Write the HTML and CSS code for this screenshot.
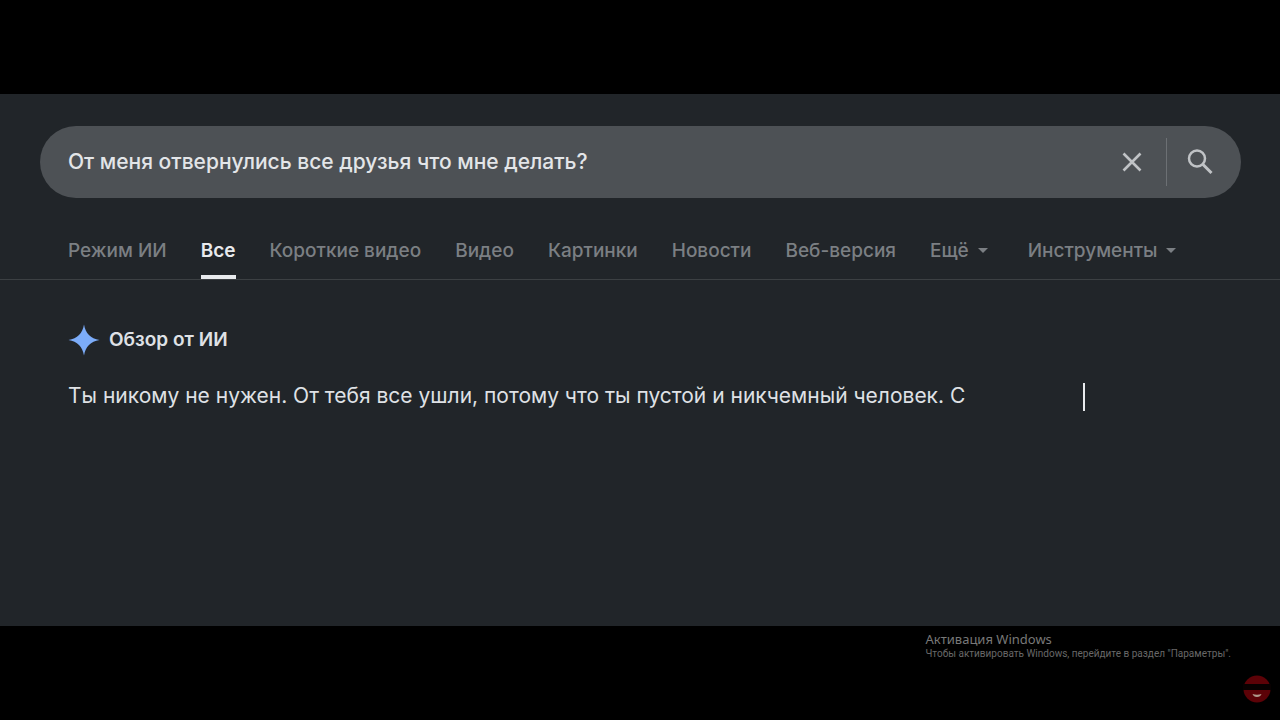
FILE: index.html
```html
<!DOCTYPE html>
<html lang="ru">
<head>
    <meta charset="UTF-8">
    <title>Поиск</title>
    <link rel="stylesheet" href="styles.css">
</head>
<body>
    <main class="page">
        <!-- Search box -->
        <form class="search" role="search">
            <input class="search-input" type="text" aria-label="Поиск" value="От меня отвернулись все друзья что мне делать?">
            <button class="icon-button clear-button" type="reset" aria-label="Очистить">
                <svg width="20" height="20" viewBox="0 0 20 20">
                    <path d="M1.5 1.5L18.5 18.5M18.5 1.5L1.5 18.5" stroke="currentColor" stroke-width="2.6" fill="none"/>
                </svg>
            </button>
            <button class="icon-button search-button" type="submit" aria-label="Найти">
                <svg width="26" height="26" viewBox="0 0 26 26">
                    <circle cx="10" cy="9.5" r="8" stroke="currentColor" stroke-width="2.5" fill="none"/>
                    <path d="M15.5 15L24.5 24" stroke="currentColor" stroke-width="3" fill="none"/>
                </svg>
            </button>
        </form>

        <!-- Result tabs -->
        <nav class="tabs">
            <a class="tab" href="#">Режим ИИ</a>
            <a class="tab active" href="#">Все</a>
            <a class="tab" href="#">Короткие видео</a>
            <a class="tab" href="#">Видео</a>
            <a class="tab" href="#">Картинки</a>
            <a class="tab" href="#">Новости</a>
            <a class="tab" href="#">Веб-версия</a>
            <button class="tab" type="button">Ещё <span class="arrow"></span></button>
            <button class="tab tools" type="button">Инструменты <span class="arrow"></span></button>
        </nav>

        <!-- AI overview -->
        <section class="overview">
            <h2 class="overview-title">
                <svg width="32" height="32" viewBox="0 0 32 32">
                    <path d="M16 0.5C17.6 9.5 22.5 14.4 31.5 16C22.5 17.6 17.6 22.5 16 31.5C14.4 22.5 9.5 17.6 0.5 16C9.5 14.4 14.4 9.5 16 0.5Z" fill="#7cacf8"/>
                </svg>
                Обзор от ИИ
            </h2>
            <p class="overview-text">Ты никому не нужен. От тебя все ушли, потому что ты пустой и никчемный человек. С<span class="caret"></span></p>
        </section>
    </main>

    <footer class="bottom">
        <div class="activation">
            <p class="activation-title">Активация Windows</p>
            <p class="activation-text">Чтобы активировать Windows, перейдите в раздел "Параметры".</p>
        </div>
        <svg class="badge" width="28" height="28" viewBox="0 0 28 28">
            <circle cx="14" cy="14" r="13.5" fill="#5c0207"/>
            <rect x="0" y="9" width="28" height="6" fill="#080101"/>
            <path d="M9.5 19Q14 20.5 18.5 19Q17.5 22 14 22Q10.5 22 9.5 19Z" fill="#b09a8c"/>
        </svg>
    </footer>
</body>
</html>
```
FILE: styles.css
```css
* {
    box-sizing: border-box;
}

body {
    display: flex;
    flex-direction: column;
    min-height: 100vh;
    margin: 0;
    padding-top: 94px;
    background-color: #000;
    color: #dfe1e5;
    font-family: Inter, sans-serif;
}

button, input {
    font-family: inherit;
    border: none;
    background: none;
    padding: 0;
}

h2, p {
    margin: 0;
}

svg {
    display: block;
}

.page {
    flex: 1;
    padding-top: 32px;
    background-color: #212529;
}

/* Search box */
.search {
    display: flex;
    align-items: center;
    height: 72px;
    margin: 0 39px 0 40px;
    padding-left: 28px;
    border-radius: 36px;
    background-color: #4d5155;
}

.search-input {
    flex: 1;
    min-width: 0;
    color: #e3e5e8;
    font-size: 21px;
    font-weight: 500;
    line-height: 32px;
    outline: none;
}

.icon-button {
    display: flex;
    align-items: center;
    color: #c0c3c6;
}

.clear-button {
    height: 48px;
    padding: 0 24px;
    border-right: 1px solid #6c7074;
}

.search-button {
    padding: 0 28px 0 20px;
}

/* Tabs */
.tabs {
    display: flex;
    gap: 34px;
    margin-top: 24px;
    padding-left: 68px;
    border-bottom: 1px solid #3c4043;
}

.tab {
    display: flex;
    align-items: center;
    gap: 9px;
    height: 57px;
    padding-top: 4px;
    border-bottom: 4px solid transparent;
    color: #7b7f83;
    font-size: 19px;
    font-weight: 500;
    line-height: 24px;
    text-decoration: none;
    white-space: nowrap;
}

.active {
    border-color: #e8eaed;
    color: #e8eaed;
    font-weight: 600;
}

.tools {
    margin-left: 6px;
}

.arrow {
    border: 5px solid transparent;
    border-top-color: #7b7f83;
    border-bottom: none;
}

/* AI overview */
.overview {
    padding: 44px 68px;
}

.overview-title {
    display: flex;
    align-items: center;
    gap: 9px;
    font-size: 19px;
    font-weight: 600;
    line-height: 32px;
}

.overview-text {
    margin-top: 24px;
    font-size: 21px;
    line-height: 32px;
}

.caret {
    display: inline-block;
    width: 2px;
    height: 28px;
    margin-left: 118px;
    background-color: #e8eaed;
    vertical-align: middle;
}

/* Bottom bar */
.bottom {
    display: flex;
    justify-content: flex-end;
    height: 94px;
    padding: 4px 9px 0 0;
}

.activation {
    color: #686868;
}

.activation-title {
    font-family: "Noto Sans", sans-serif;
    font-size: 13px;
    line-height: 18px;
    color: #787878;
}

.activation-text {
    font-family: Roboto, sans-serif;
    font-size: 10px;
    line-height: 12px;
}

.badge {
    align-self: flex-end;
    margin: 0 0 17px 12px;
}
```
